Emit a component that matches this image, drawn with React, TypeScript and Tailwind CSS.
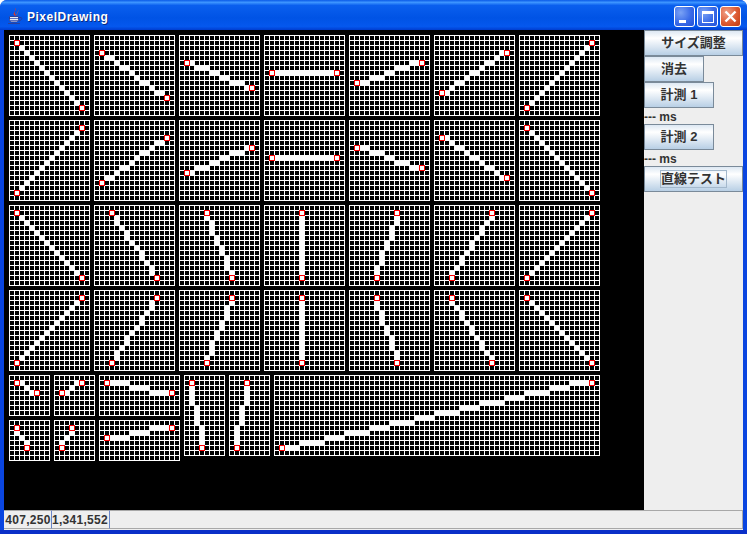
const PATTERNS: Record<string, number[]> = {
  "13:0": [0, 0, 0, 0, 0, 0, 0, 0, 0, 0, 0, 0, 0, 0],
  "13:2": [0, 0, 0, 0, 0, 1, 1, 1, 1, 2, 2, 2, 2, 2],
  "13:4": [0, 0, 0, 1, 1, 1, 2, 2, 3, 3, 3, 4, 4, 4],
  "13:5": [0, 0, 1, 1, 1, 2, 2, 3, 3, 4, 4, 4, 5, 5],
  "13:8": [0, 0, 1, 2, 2, 3, 4, 4, 5, 6, 6, 7, 8, 8],
  "13:9": [0, 1, 1, 2, 3, 3, 4, 5, 6, 6, 7, 8, 8, 9],
  "13:13": [0, 1, 2, 3, 4, 5, 6, 7, 8, 9, 10, 11, 12, 13],
  "4:2": [0, 0, 1, 2, 2],
  "62:13": [4, 5, 4, 5, 4, 5, 4, 5, 4, 5, 4, 5, 4, 5].flatMap((len, i) => Array<number>(len).fill(i)),
};

type Line = [number, number, number, number];

function lineCells([x0, y0, x1, y1]: Line): [number, number][] {
  const dx = x1 - x0;
  const dy = y1 - y0;
  const xMajor = Math.abs(dx) >= Math.abs(dy);
  const n = Math.max(Math.abs(dx), Math.abs(dy));
  const d = Math.min(Math.abs(dx), Math.abs(dy));
  const pattern = PATTERNS[`${n}:${d}`];
  const sx = Math.sign(dx);
  const sy = Math.sign(dy);
  return pattern.map((o, k) => (xMajor ? [x0 + k * sx, y0 + o * sy] : [x0 + o * sx, y0 + k * sy]));
}

function Panel({ cols, rows, line }: { cols: number; rows: number; line: Line }) {
  const w = cols * 5 + 1;
  const h = rows * 5 + 1;
  let grid = "";
  for (let i = 0; i <= cols; i++) grid += `M${i * 5 + 0.5} 0V${h}`;
  for (let i = 0; i <= rows; i++) grid += `M0 ${i * 5 + 0.5}H${w}`;
  return (
    <svg width={w} height={h} viewBox={`0 0 ${w} ${h}`} className="block shrink-0">
      <path d={grid} stroke="#ffffff" strokeWidth={1} fill="none" />
      {lineCells(line).map(([x, y], i) => (
        <rect key={i} x={x * 5} y={y * 5} width={6} height={6} fill="#ffffff" />
      ))}
      <rect x={line[0] * 5 + 0.5} y={line[1] * 5 + 0.5} width={5} height={5} fill="#ffffff" stroke="#ff0000" />
      <rect x={line[2] * 5 + 0.5} y={line[3] * 5 + 0.5} width={5} height={5} fill="#ffffff" stroke="#ff0000" />
    </svg>
  );
}

const ROWS: Line[][] = [
  [[1, 1, 14, 14], [1, 3, 14, 12], [1, 5, 14, 10], [1, 7, 14, 7], [1, 9, 14, 5], [1, 11, 14, 3], [1, 14, 14, 1]],
  [[1, 14, 14, 1], [1, 12, 14, 3], [1, 10, 14, 5], [1, 7, 14, 7], [1, 5, 14, 9], [1, 3, 14, 11], [1, 1, 14, 14]],
  [[1, 1, 14, 14], [3, 1, 12, 14], [5, 1, 10, 14], [7, 1, 7, 14], [9, 1, 5, 14], [11, 1, 3, 14], [14, 1, 1, 14]],
  [[1, 14, 14, 1], [3, 14, 12, 1], [5, 14, 10, 1], [7, 14, 7, 1], [5, 1, 9, 14], [3, 1, 11, 14], [1, 1, 14, 14]],
];

function JavaIcon() {
  return (
    <svg width="16" height="17" viewBox="0 0 16 17" className="shrink-0">
      <path d="M8 0c2.500 2-2 3.500 .5 6.500 .5.8 .3 1.200-.3 1.500C4 5.500 9.500 4 8 0z" fill="#e8351c" />
      <path d="M11 2c1.500 2-2 3-.5 5.500C8 6 11.500 4.500 11 2z" fill="#f07020" />
      <path d="M2.500 8.500h9v3c0 2-1.500 2.500-2.500 2.500H5c-1 0-2.500-.5-2.500-2.500z" fill="#e4ecf8" stroke="#2a3f9c" strokeWidth="1" />
      <path d="M3 10.500h8M3 12.500h8" stroke="#5a70c0" strokeWidth="1" />
      <path d="M12 9.500h2c1.200 0 1.200 3-2 3.500" fill="none" stroke="#2a3f9c" strokeWidth="1" />
      <path d="M1 15.500h12" stroke="#2a3f9c" strokeWidth="1.200" />
    </svg>
  );
}

function WinButton({ kind }: { kind: "min" | "max" | "close" }) {
  const bg =
    kind === "close"
      ? "bg-[radial-gradient(circle_at_30%_30%,#f0a088,#dd5a32_55%,#c03a10)]"
      : "bg-[radial-gradient(circle_at_30%_30%,#7aa2f5,#3a6be8_55%,#2050d8)]";
  return (
    <div className={`flex h-[21px] w-[21px] items-center justify-center rounded-[3px] border border-white ${bg}`}>
      {kind === "min" && <div className="mt-[9px] mr-[5px] h-[3px] w-[7px] bg-white" />}
      {kind === "max" && <div className="h-[12px] w-[12px] border border-t-[3px] border-white" />}
      {kind === "close" && (
        <svg width="13" height="13" viewBox="0 0 13 13">
          <path d="M1.500 1.500l10 10M11.500 1.500l-10 10" stroke="#ffffff" strokeWidth="2.400" />
        </svg>
      )}
    </div>
  );
}

const UI = { fontFamily: '"Liberation Sans", "Noto Sans CJK JP", sans-serif' };

function JButton({ label, w, focus }: { label: string; w: string; focus?: boolean }) {
  return (
    <div
      className={`flex h-[26px] ${w} items-center justify-center border border-[#7a8a99] bg-[linear-gradient(#dde8f3,#ffffff_30%,#b8cfe5)] text-[13px] font-bold text-[#333333]`}
    >
      {focus ? (
        <span className="flex h-[18px] w-[67px] items-center justify-center border border-[#a3b8cc]">{label}</span>
      ) : (
        label
      )}
    </div>
  );
}

export default function App() {
  return (
    <div
      className="flex h-[534px] w-[747px] flex-col overflow-hidden rounded-t-[7px] border-b-4 border-[#0a2fc8] bg-[#0a45e0]"
      style={UI}
    >
      <div className="flex h-[30px] shrink-0 items-center bg-[linear-gradient(#0a5ae8,#3d95ff_8%,#0a5fee_18%,#0053e5_60%,#0558ee_88%,#003dd0)] pt-[3px] pr-[6px] pl-[7px]">
        <JavaIcon />
        <span className="ml-[4px] flex-1 text-[12px] font-bold tracking-[0.5px] text-white [text-shadow:1px_1px_0_#0a2a80]">
          PixelDrawing
        </span>
        <div className="flex gap-[2px]">
          <WinButton kind="min" />
          <WinButton kind="max" />
          <WinButton kind="close" />
        </div>
      </div>

      <div className="mx-[4px] flex min-h-0 flex-1 flex-col bg-[#eeeeee]">
        <div className="flex min-h-0 flex-1">
          <div className="flex w-[640px] shrink-0 flex-col gap-1 bg-black pt-[5px] pl-[5px]">
            {ROWS.map((row, i) => (
              <div key={i} className="flex gap-1">
                {row.map((line, j) => (
                  <Panel key={j} cols={16} rows={16} line={line} />
                ))}
              </div>
            ))}
            <div className="flex gap-1">
              <div className="flex flex-col gap-1">
                <div className="flex gap-1">
                  <Panel cols={8} rows={8} line={[1, 1, 5, 3]} />
                  <Panel cols={8} rows={8} line={[1, 3, 5, 1]} />
                  <Panel cols={16} rows={8} line={[1, 1, 14, 3]} />
                </div>
                <div className="flex gap-1">
                  <Panel cols={8} rows={8} line={[1, 1, 3, 5]} />
                  <Panel cols={8} rows={8} line={[3, 1, 1, 5]} />
                  <Panel cols={16} rows={8} line={[1, 3, 14, 1]} />
                </div>
              </div>
              <Panel cols={8} rows={16} line={[1, 1, 3, 14]} />
              <Panel cols={8} rows={16} line={[3, 1, 1, 14]} />
              <Panel cols={65} rows={16} line={[1, 14, 63, 1]} />
            </div>
          </div>

          <div className="flex flex-1 flex-col items-start">
            <JButton label="サイズ調整" w="w-[99px]" />
            <JButton label="消去" w="w-[60px]" />
            <JButton label="計測 1" w="w-[70px]" />
            <div className="flex h-[16px] items-center pt-[2px] text-[12px] font-bold text-[#333333]">--- ms</div>
            <JButton label="計測 2" w="w-[70px]" />
            <div className="flex h-[16px] items-center pt-[2px] text-[12px] font-bold text-[#333333]">--- ms</div>
            <JButton label="直線テスト" w="w-[99px]" focus />
          </div>
        </div>

        <div className="flex h-[20px] shrink-0 text-[12px] font-bold tracking-[0.3px] text-[#333333]">
          <div className="flex h-[19px] w-[48px] items-center justify-center border-y border-r border-[#a8a8a8] border-r-[#6a86c8] pl-[1px]">407,250</div>
          <div className="flex h-[19px] w-[58px] items-center justify-end border-y border-r border-[#a8a8a8] border-r-[#6a86c8] pr-[1px]">1,341,552</div>
          <div className="h-[19px] flex-1 border-y border-r border-[#a8a8a8]" />
        </div>
      </div>
    </div>
  );
}
